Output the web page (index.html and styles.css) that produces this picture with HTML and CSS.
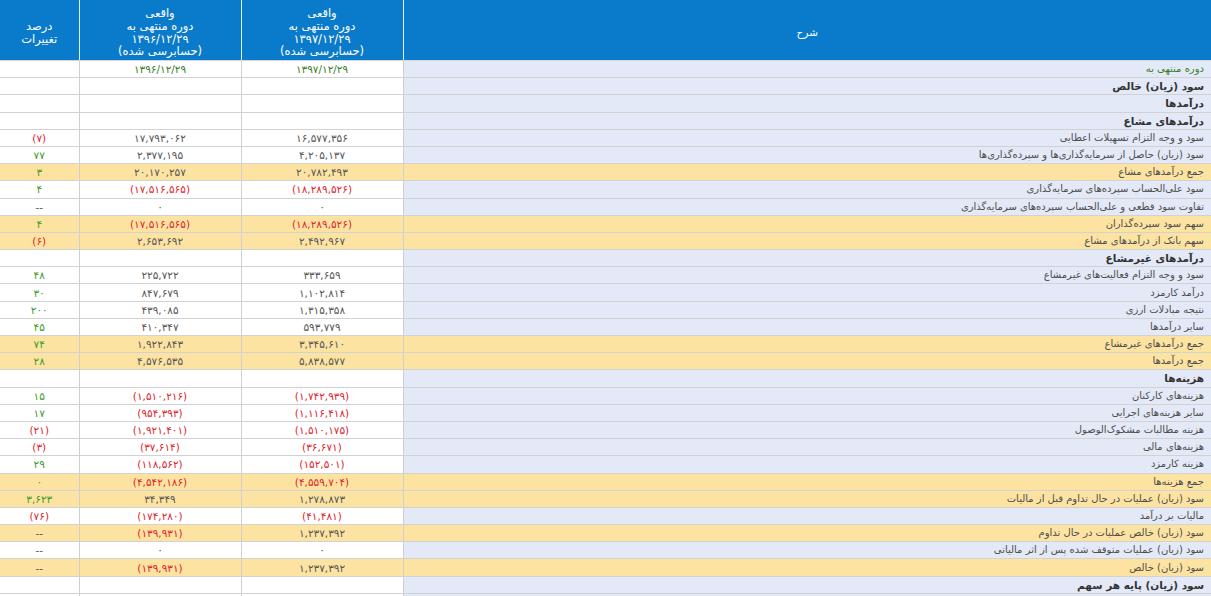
FILE: index.html
```html
<!DOCTYPE html>
<html lang="fa" dir="rtl">
<head>
<meta charset="utf-8">
<title>صورت سود و زیان</title>
<link rel="stylesheet" href="styles.css">
</head>
<body>
<table class="report">
  <colgroup>
    <col class="c-desc">
    <col class="c-num">
    <col class="c-num">
    <col class="c-pct">
  </colgroup>
  <thead>
    <tr>
      <th class="h-desc">شرح</th>
      <th>واقعی<br>دوره منتهی به<br>۱۳۹۷/۱۲/۲۹<br>(حسابرسی شده)</th>
      <th>واقعی<br>دوره منتهی به<br>۱۳۹۶/۱۲/۲۹<br>(حسابرسی شده)</th>
      <th>درصد<br>تغییرات</th>
    </tr>
  </thead>
  <tbody>
    <tr class="date"><td class="d">دوره منتهی به</td><td>۱۳۹۷/۱۲/۲۹</td><td>۱۳۹۶/۱۲/۲۹</td><td></td></tr>
    <tr class="head"><td class="d">سود (زیان) خالص</td><td></td><td></td><td></td></tr>
    <tr class="head"><td class="d">درآمدها</td><td></td><td></td><td></td></tr>
    <tr class="head"><td class="d">درآمدهای مشاع</td><td></td><td></td><td></td></tr>
    <tr><td class="d">سود و وجه التزام تسهیلات اعطایی</td><td>۱۶,۵۷۷,۳۵۶</td><td>۱۷,۷۹۳,۰۶۲</td><td class="neg">(۷)</td></tr>
    <tr><td class="d">سود (زیان) حاصل از سرمایه‌گذاری‌ها و سپرده‌گذاری‌ها</td><td>۴,۲۰۵,۱۳۷</td><td>۲,۳۷۷,۱۹۵</td><td class="pos">۷۷</td></tr>
    <tr class="sum"><td class="d">جمع درآمدهای مشاع</td><td>۲۰,۷۸۲,۴۹۳</td><td>۲۰,۱۷۰,۲۵۷</td><td class="pos">۳</td></tr>
    <tr><td class="d">سود علی‌الحساب سپرده‌های سرمایه‌گذاری</td><td class="neg">(۱۸,۲۸۹,۵۲۶)</td><td class="neg">(۱۷,۵۱۶,۵۶۵)</td><td class="pos">۴</td></tr>
    <tr><td class="d">تفاوت سود قطعی و علی‌الحساب سپرده‌های سرمایه‌گذاری</td><td>۰</td><td>۰</td><td>--</td></tr>
    <tr class="sum"><td class="d">سهم سود سپرده‌گذاران</td><td class="neg">(۱۸,۲۸۹,۵۲۶)</td><td class="neg">(۱۷,۵۱۶,۵۶۵)</td><td class="pos">۴</td></tr>
    <tr class="sum"><td class="d">سهم بانک از درآمدهای مشاع</td><td>۲,۴۹۲,۹۶۷</td><td>۲,۶۵۳,۶۹۲</td><td class="neg">(۶)</td></tr>
    <tr class="head"><td class="d">درآمدهای غیرمشاع</td><td></td><td></td><td></td></tr>
    <tr><td class="d">سود و وجه التزام فعالیت‌های غیرمشاع</td><td>۳۳۳,۶۵۹</td><td>۲۲۵,۷۲۲</td><td class="pos">۴۸</td></tr>
    <tr><td class="d">درآمد کارمزد</td><td>۱,۱۰۲,۸۱۴</td><td>۸۴۷,۶۷۹</td><td class="pos">۳۰</td></tr>
    <tr><td class="d">نتیجه مبادلات ارزی</td><td>۱,۳۱۵,۳۵۸</td><td>۴۳۹,۰۸۵</td><td class="pos">۲۰۰</td></tr>
    <tr><td class="d">سایر درآمدها</td><td>۵۹۳,۷۷۹</td><td>۴۱۰,۳۴۷</td><td class="pos">۴۵</td></tr>
    <tr class="sum"><td class="d">جمع درآمدهای غیرمشاع</td><td>۳,۳۴۵,۶۱۰</td><td>۱,۹۲۲,۸۴۳</td><td class="pos">۷۴</td></tr>
    <tr class="sum"><td class="d">جمع درآمدها</td><td>۵,۸۳۸,۵۷۷</td><td>۴,۵۷۶,۵۳۵</td><td class="pos">۲۸</td></tr>
    <tr class="head"><td class="d">هزینه‌ها</td><td></td><td></td><td></td></tr>
    <tr><td class="d">هزینه‌های کارکنان</td><td class="neg">(۱,۷۴۲,۹۳۹)</td><td class="neg">(۱,۵۱۰,۲۱۶)</td><td class="pos">۱۵</td></tr>
    <tr><td class="d">سایر هزینه‌های اجرایی</td><td class="neg">(۱,۱۱۶,۴۱۸)</td><td class="neg">(۹۵۴,۳۹۳)</td><td class="pos">۱۷</td></tr>
    <tr><td class="d">هزینه مطالبات مشکوک‌الوصول</td><td class="neg">(۱,۵۱۰,۱۷۵)</td><td class="neg">(۱,۹۲۱,۴۰۱)</td><td class="neg">(۲۱)</td></tr>
    <tr><td class="d">هزینه‌های مالی</td><td class="neg">(۳۶,۶۷۱)</td><td class="neg">(۳۷,۶۱۴)</td><td class="neg">(۳)</td></tr>
    <tr><td class="d">هزینه کارمزد</td><td class="neg">(۱۵۲,۵۰۱)</td><td class="neg">(۱۱۸,۵۶۲)</td><td class="pos">۲۹</td></tr>
    <tr class="sum"><td class="d">جمع هزینه‌ها</td><td class="neg">(۴,۵۵۹,۷۰۴)</td><td class="neg">(۴,۵۴۲,۱۸۶)</td><td class="pos">۰</td></tr>
    <tr class="sum"><td class="d">سود (زیان) عملیات در حال تداوم قبل از مالیات</td><td>۱,۲۷۸,۸۷۳</td><td>۳۴,۳۴۹</td><td class="pos">۳,۶۲۳</td></tr>
    <tr><td class="d">مالیات بر درآمد</td><td class="neg">(۴۱,۴۸۱)</td><td class="neg">(۱۷۴,۲۸۰)</td><td class="neg">(۷۶)</td></tr>
    <tr class="sum"><td class="d">سود (زیان) خالص عملیات در حال تداوم</td><td>۱,۲۳۷,۳۹۲</td><td class="neg">(۱۳۹,۹۳۱)</td><td>--</td></tr>
    <tr><td class="d">سود (زیان) عملیات متوقف شده پس از اثر مالیاتی</td><td>۰</td><td>۰</td><td>--</td></tr>
    <tr class="sum"><td class="d">سود (زیان) خالص</td><td>۱,۲۳۷,۳۹۲</td><td class="neg">(۱۳۹,۹۳۱)</td><td>--</td></tr>
    <tr class="head"><td class="d">سود (زیان) پایه هر سهم</td><td></td><td></td><td></td></tr>
    <tr><td class="d"></td><td></td><td></td><td></td></tr>
  </tbody>
</table>
</body>
</html>
```
FILE: styles.css
```css
html, body {
  margin: 0;
  padding: 0;
  background: #ffffff;
}
body {
  font-family: "DejaVu Sans", Tahoma, sans-serif;
  font-size: 10px;
  color: #555555;
  overflow: hidden;
}
.report {
  width: 1211px;
  table-layout: fixed;
  border-collapse: collapse;
}
.c-desc { width: 808px; }
.c-num { width: 162px; }
.c-pct { width: 79px; }

.report th {
  background: #0a7bcb;
  color: #ffffff;
  font-weight: normal;
  font-size: 11.5px;
  line-height: 12.6px;
  height: 55px;
  padding: 5px 0 0 0;
  text-align: center;
  vertical-align: middle;
  border-left: 1px solid #e6eef7;
  border-bottom: 1px solid #d6d6d6;
}
.report th:last-child { border-left: none; }
.report th.h-desc { font-size: 10.5px; }

.report td {
  height: 16.2px;
  padding: 0;
  line-height: 16px;
  font-size: 10.5px;
  text-align: center;
  white-space: nowrap;
  border-top: 1px solid #d2d2d2;
  border-bottom: 1px solid #d2d2d2;
  border-left: 1px solid #cfcfcf;
  background: #ffffff;
}
.report td:last-child { border-left: none; }
.report td.d {
  background: #e3e9f6;
  text-align: right;
  padding-right: 7px;
  font-size: 10px;
  color: #4d4d4d;
}
.report tr.head td.d {
  font-weight: bold;
  font-size: 10.5px;
  color: #333333;
}
.report tr.sum td,
.report tr.sum td.d {
  background: #fde3a2;
}
.report tr.date td { color: #3b7d1e; }
.report tr.date td.d { color: #3b7d1e; }
.report td.neg { color: #e0242d; }
.report td.pos { color: #3c9a2c; }
```
